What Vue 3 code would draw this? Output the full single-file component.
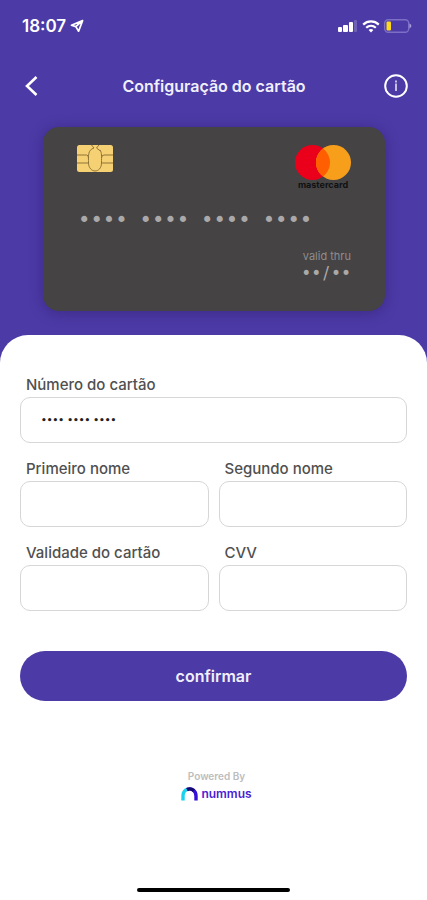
<script setup>
import { reactive } from 'vue';

const form = reactive({
  number: '•••• •••• ••••',
  firstName: '',
  lastName: '',
  expiry: '',
  cvv: '',
});

const digitGroups = ['••••', '••••', '••••', '••••'];
</script>

<template>
  <div class="screen">
    <header class="top">
      <div class="status-bar">
        <div class="status-group">
          <span class="time">18:07</span>
          <svg width="14" height="14" viewBox="0 0 14 14">
            <path d="M12.6 1.6 L1.4 6.2 L5.8 7.6 L8.6 12.2 Z M12.6 1.6 L5.8 7.6" fill="none" stroke="#fff" stroke-width="1.7" stroke-linejoin="round"/>
          </svg>
        </div>
        <div class="status-group">
          <svg width="20" height="12" viewBox="0 0 20 12" fill="#fff">
            <rect x="0" y="7" width="4" height="5" rx="1"/>
            <rect x="5" y="5" width="5" height="7" rx="1"/>
            <rect x="11" y="2" width="4" height="10" rx="1"/>
            <rect x="16" y="0" width="3" height="12" rx="1" opacity="0.2"/>
          </svg>
          <svg width="18" height="13" viewBox="0 0 18 13" fill="none" stroke="#fff" stroke-width="2.2">
            <path d="M1.2 4.6 C5.6 0.4 12.4 0.4 16.8 4.6"/>
            <path d="M4.2 7.8 C7 5.2 11 5.2 13.8 7.8"/>
            <path d="M9 12.4 L6.6 10 C8 8.8 10 8.8 11.4 10 Z" fill="#fff" stroke="none"/>
          </svg>
          <svg width="28" height="14" viewBox="0 0 28 14">
            <rect x="0.7" y="0.7" width="24" height="12.6" rx="3.5" fill="none" stroke="#7d6fc6" stroke-width="1.4"/>
            <rect x="2.5" y="2.5" width="4.5" height="9" rx="1" fill="#ffd91f"/>
            <path d="M25.4 4.6 C28 5.6 28 8.4 25.4 9.4 Z" fill="#a59bd9"/>
          </svg>
        </div>
      </div>

      <nav class="nav">
        <button type="button" class="icon-button" aria-label="Voltar">
          <svg width="24" height="24" viewBox="0 0 24 24" fill="none" stroke="#fff" stroke-width="2.6">
            <path d="M16.5 3 L7 12 L16.5 21"/>
          </svg>
        </button>
        <h1 class="title">Configuração do cartão</h1>
        <button type="button" class="icon-button" aria-label="Informações">
          <svg width="24" height="24" viewBox="0 0 24 24" fill="none" stroke="#fff">
            <circle cx="12" cy="12" r="10.8" stroke-width="2"/>
            <path d="M12 9.5 V17 M12 6.5 V8.5" stroke-width="1.8" opacity="0.75"/>
          </svg>
        </button>
      </nav>

      <section class="card">
        <div class="card-head">
          <svg width="36" height="27" viewBox="0 0 36 27">
            <rect width="36" height="27" rx="2.5" fill="#f5d173"/>
            <g fill="none" stroke="#8f7437" stroke-width="1">
              <path d="M0 10 H9.5 Q11.5 10 11.5 13 M36 10 H27 Q24.5 10 24.5 13 M25 18 H36 M0 18 H11.5"/>
              <path d="M14.5 0 L17 3 C10.5 5 11.5 11 11.5 18 C11.5 23 15 26 18 26 C21.5 26 24.5 23 24.5 18 C24.5 11 25 8 23 5 M22 0 L19.5 3 L23.5 6"/>
            </g>
          </svg>
          <div class="brand">
            <svg width="56" height="35" viewBox="0 0 56 35">
              <circle cx="17.5" cy="17.5" r="17.5" fill="#eb001b"/>
              <circle cx="38.5" cy="17.5" r="17.5" fill="#f79e1b"/>
              <path d="M28 3.5 A17.5 17.5 0 0 1 28 31.5 A17.5 17.5 0 0 1 28 3.5 Z" fill="#ff5f00"/>
            </svg>
            <span class="brand-name">mastercard</span>
          </div>
        </div>
        <div class="card-number">
          <span v-for="(group, i) in digitGroups" :key="i">{{ group }}</span>
        </div>
        <div class="card-valid">
          <span class="valid-label">valid thru</span>
          <span class="valid-date"><span>••</span><span>/</span><span>••</span></span>
        </div>
      </section>
    </header>

    <main class="sheet">
      <form class="form" @submit.prevent>
        <div class="field wide">
          <label for="number">Número do cartão</label>
          <input id="number" v-model="form.number" class="masked" type="text" inputmode="numeric"/>
        </div>
        <div class="field">
          <label for="first-name">Primeiro nome</label>
          <input id="first-name" v-model="form.firstName" type="text"/>
        </div>
        <div class="field">
          <label for="last-name">Segundo nome</label>
          <input id="last-name" v-model="form.lastName" type="text"/>
        </div>
        <div class="field">
          <label for="expiry">Validade do cartão</label>
          <input id="expiry" v-model="form.expiry" type="text"/>
        </div>
        <div class="field">
          <label for="cvv">CVV</label>
          <input id="cvv" v-model="form.cvv" type="text"/>
        </div>
        <button type="submit" class="confirm">confirmar</button>
      </form>

      <footer class="powered">
        <span class="powered-label">Powered By</span>
        <div class="nummus">
          <svg width="17" height="14" viewBox="0 0 17 14" fill="none" stroke-width="3.4">
            <path d="M2 13.5 V9 C2 5.5 4 2.8 7 2.1" stroke="#19d3ee"/>
            <path d="M6 2.5 C11 0.5 15 4 15 9 V13.5" stroke="#3510d8"/>
            <path d="M6 2.5 C8.5 1.4 11 2 12.8 3.8" stroke="#160a70"/>
          </svg>
          <span>nummus</span>
        </div>
      </footer>

      <div class="home-indicator"></div>
    </main>
  </div>
</template>

<style>
body {
  margin: 0;
  background: #4c3aa6;
}
</style>

<style scoped>
.screen {
  display: flex;
  flex-direction: column;
  min-height: 100vh;
  background: #4c3aa6;
  font-family: Inter, "Liberation Sans", sans-serif;
}

.top {
  padding: 14px 19px 24px 20px;
}

.status-bar {
  display: flex;
  justify-content: space-between;
  align-items: center;
  height: 24px;
  padding-left: 2px;
  margin-right: -4px;
}

.status-group {
  display: flex;
  align-items: center;
  gap: 4px;
}

.time {
  color: #fff;
  font-size: 17px;
  font-weight: 600;
}

.nav {
  display: flex;
  justify-content: space-between;
  align-items: center;
  height: 40px;
  margin-top: 28px;
}

.icon-button {
  display: flex;
  padding: 0;
  border: none;
  background: none;
  cursor: pointer;
}

.title {
  margin: 0;
  color: #f1effb;
  font-size: 16px;
  font-weight: 600;
}

.card {
  box-sizing: border-box;
  min-height: 184px;
  margin: 21px 23px 0;
  padding: 18px 34px;
  border-radius: 16px;
  background: #454344;
  box-shadow: 0 2px 14px rgba(40, 20, 90, 0.4);
  color: #aaa8a9;
}

.card-head {
  display: flex;
  justify-content: space-between;
  align-items: flex-start;
}

.brand {
  display: flex;
  flex-direction: column;
  align-items: center;
}

.brand-name {
  color: #111;
  font-size: 9px;
  font-weight: 700;
  line-height: 10px;
}

.card-number {
  display: flex;
  gap: 12px;
  margin-top: 18px;
  padding-left: 1px;
  font-family: "DejaVu Sans", sans-serif;
  font-size: 21px;
  line-height: 24px;
}

.card-valid {
  display: flex;
  flex-direction: column;
  align-items: flex-end;
  margin-top: 16px;
}

.valid-label {
  color: #8f8d8e;
  font-size: 11px;
  line-height: 16px;
}

.valid-date {
  display: flex;
  gap: 2px;
  font-family: "DejaVu Sans", sans-serif;
  font-size: 17px;
  line-height: 18px;
}

.sheet {
  display: flex;
  flex: 1;
  flex-direction: column;
  padding: 40px 20px 8px;
  border-radius: 28px 28px 0 0;
  background: #fff;
}

.form {
  display: grid;
  grid-template-columns: 1fr 1fr;
  gap: 16px 10px;
}

.wide {
  grid-column: 1 / -1;
}

.field {
  display: flex;
  flex-direction: column;
  min-width: 0;
}

.field label {
  padding-left: 6px;
  margin-bottom: 2px;
  color: #505050;
  font-size: 15px;
  font-weight: 500;
  line-height: 20px;
}

.field input {
  box-sizing: border-box;
  width: 100%;
  height: 46px;
  padding: 0 20px;
  border: 1px solid #d6d6d6;
  border-radius: 10px;
  background: #fff;
  color: #222;
  font-family: inherit;
  font-size: 15px;
}

.field .masked {
  font-family: "DejaVu Sans", sans-serif;
  font-size: 9px;
  font-weight: 700;
}

.confirm {
  grid-column: 1 / -1;
  height: 50px;
  margin-top: 24px;
  border: none;
  border-radius: 25px;
  background: #4c3aa6;
  color: #f1effb;
  font-family: inherit;
  font-size: 16px;
  font-weight: 600;
  cursor: pointer;
}

.powered {
  display: flex;
  flex-direction: column;
  align-items: center;
  margin-top: 68px;
  padding-left: 6px;
}

.powered-label {
  color: #bdbdbd;
  font-size: 10px;
  font-weight: 600;
  line-height: 14px;
}

.nummus {
  display: flex;
  align-items: center;
  gap: 3px;
  margin-top: 4px;
  color: #4a20d6;
  font-size: 12px;
  font-weight: 600;
  line-height: 14px;
}

.home-indicator {
  align-self: center;
  width: 36vw;
  height: 4px;
  margin-top: auto;
  border-radius: 2px;
  background: #000;
}
</style>
